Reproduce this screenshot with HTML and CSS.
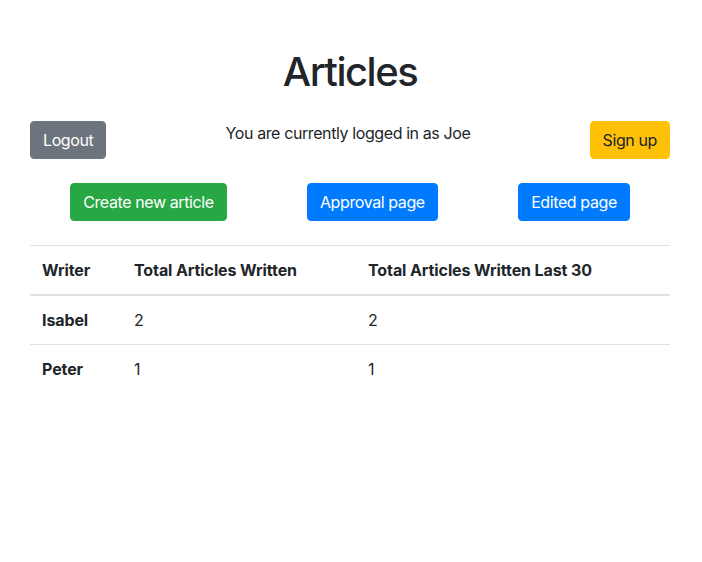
FILE: index.html
```html
<!DOCTYPE html>
<html lang="en">
<head>
<meta charset="utf-8">
<title>Articles</title>
<link rel="stylesheet" href="styles.css">
</head>
<body>
<main class="page">
  <h1 class="title">Articles</h1>
  <div class="top-row">
    <button class="btn btn-secondary">Logout</button>
    <p class="status">You are currently logged in as Joe</p>
    <button class="btn btn-warning">Sign up</button>
  </div>
  <div class="action-row">
    <button class="btn btn-success">Create new article</button>
    <button class="btn btn-primary">Approval page</button>
    <button class="btn btn-primary">Edited page</button>
  </div>
  <table class="table">
    <thead>
      <tr>
        <th class="col-writer">Writer</th>
        <th class="col-total">Total Articles Written</th>
        <th>Total Articles Written Last 30</th>
      </tr>
    </thead>
    <tbody>
      <tr>
        <th>Isabel</th>
        <td>2</td>
        <td>2</td>
      </tr>
      <tr>
        <th>Peter</th>
        <td>1</td>
        <td>1</td>
      </tr>
    </tbody>
  </table>
</main>
</body>
</html>
```

FILE: styles.css
```css
* { box-sizing: border-box; }
html, body { margin: 0; padding: 0; background: #fff; }
body {
  font-family: Inter, "Liberation Sans", sans-serif;
  font-size: 16px;
  line-height: 1.5;
  letter-spacing: -0.4px;
  color: #212529;
}
.page {
  padding: 48px 32px 0 30px;
}
.title {
  margin: 0 0 25px;
  text-align: center;
  font-size: 40px;
  font-weight: 500;
  line-height: 48px;
  letter-spacing: -1.5px;
}
.top-row {
  display: flex;
  justify-content: space-between;
  align-items: flex-start;
}
.status {
  margin: 0;
  line-height: 24px;
}
.action-row {
  display: flex;
  justify-content: space-around;
  margin-top: 24px;
  margin-bottom: 24px;
}
.btn {
  font-family: inherit;
  font-size: 16px;
  line-height: 24px;
  letter-spacing: -0.4px;
  padding: 6px 12px;
  border: 1px solid transparent;
  border-radius: 4px;
  color: #fff;
  cursor: pointer;
}
.btn-secondary { background: #6c757d; border-color: #6c757d; }
.btn-warning { background: #ffc107; border-color: #ffc107; color: #212529; }
.btn-success { background: #28a745; border-color: #28a745; }
.btn-primary { background: #007bff; border-color: #007bff; }
.table {
  width: 100%;
  border-collapse: collapse;
}
.table th, .table td {
  padding: 12px;
  text-align: left;
  vertical-align: top;
  border-top: 1px solid #dee2e6;
  line-height: 24px;
}
.table th { font-weight: 700; letter-spacing: -0.1px; }
.table thead th { border-bottom: 2px solid #dee2e6; }
.col-writer { width: 92px; }
.col-total { width: 234px; }
```
